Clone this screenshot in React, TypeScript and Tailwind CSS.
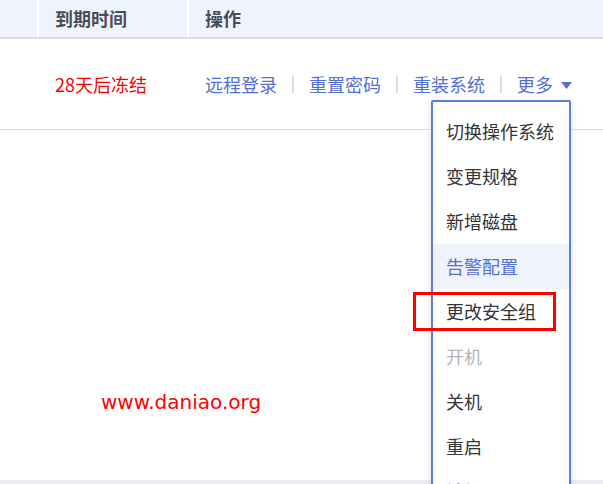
import React from "react";

const menuItems = [
  { label: "切换操作系统" },
  { label: "变更规格" },
  { label: "新增磁盘" },
  { label: "告警配置", active: true },
  { label: "更改安全组" },
  { label: "开机", disabled: true },
  { label: "关机" },
  { label: "重启" },
  { label: "销毁" },
];

const actions = ["远程登录", "重置密码", "重装系统"];

export default function App() {
  return (
    <div
      className="relative w-[603px] h-[484px] overflow-hidden bg-white"
      style={{ fontFamily: '"Noto Sans CJK SC", "Noto Sans", sans-serif' }}
    >
      {/* Table header */}
      <div className="grid grid-cols-[39px_150px_1fr] h-[39px] bg-[#eff3fb] border-b-2 border-[#dcdde4] text-[18px] font-bold text-[#4a4d58]">
        <div className="border-r-2 border-white" />
        <div className="flex items-center pl-[16px] border-r-2 border-white">到期时间</div>
        <div className="flex items-center pl-[16px]">操作</div>
      </div>

      {/* Row */}
      <div className="grid grid-cols-[39px_150px_1fr] h-[91px] border-b border-[#dcdcdc] text-[18px]">
        <div />
        <div className="flex items-center pl-[16px] text-[#ff0000]">28天后冻结</div>
        <div className="flex items-center pl-[16px] text-[#5470d6]">
          {actions.map((a) => (
            <React.Fragment key={a}>
              <span>{a}</span>
              <span className="mx-[15px] h-[17px] w-[2px] bg-[#dcdde4]" />
            </React.Fragment>
          ))}
          <span>更多</span>
          <svg className="ml-[8px] mt-[2px]" width="11" height="7" viewBox="0 0 11 7">
            <path d="M0 0 L11 0 L5.5 7 Z" fill="#5470d6" />
          </svg>
        </div>
      </div>

      {/* Watermark */}
      <div
        className="ml-[101px] mt-[260px] text-[20px] leading-[24px] text-[#ff0000]"
        style={{ fontFamily: '"DejaVu Sans", Verdana, sans-serif' }}
      >
        www.daniao.org
      </div>

      <div className="absolute left-0 right-0 bottom-0 h-[4px] bg-[#ededf2]" />

      {/* Dropdown menu */}
      <div className="absolute left-[431px] top-[100px] w-[140px] h-[420px] bg-white border-2 border-[#5b7de2] rounded-[2px] pt-[7px] shadow-[0_2px_8px_rgba(0,0,0,0.12)]">
        {menuItems.map((m) => (
          <div
            key={m.label}
            className={`h-[45px] flex items-center pl-[13px] text-[18px] ${
              m.active
                ? "bg-[#eff3fb] text-[#5470d6]"
                : m.disabled
                ? "text-[#b4b6bd]"
                : "text-[#33353d]"
            }`}
          >
            {m.label}
          </div>
        ))}
      </div>

      {/* Highlight box */}
      <div className="absolute left-[413px] top-[292px] w-[143px] h-[39px] border-[3px] border-[#ff0000]" />
    </div>
  );
}
